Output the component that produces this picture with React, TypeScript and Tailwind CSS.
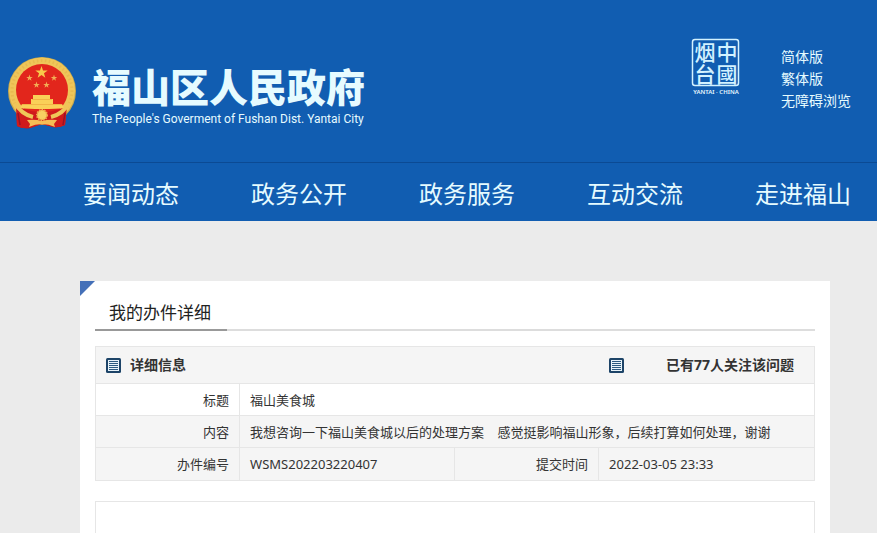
import React from "react";

const navItems = ["要闻动态", "政务公开", "政务服务", "互动交流", "走进福山"];

const topLinks = ["简体版", "繁体版", "无障碍浏览"];

function starPoints(cx: number, cy: number, r: number) {
  const points: string[] = [];
  for (let i = 0; i < 10; i++) {
    const radius = i % 2 === 0 ? r : r * 0.4;
    const angle = (Math.PI / 5) * i - Math.PI / 2;
    points.push(
      `${(cx + radius * Math.cos(angle)).toFixed(2)},${(cy + radius * Math.sin(angle)).toFixed(2)}`
    );
  }
  return points.join(" ");
}

function Emblem() {
  return (
    <svg
      viewBox="0 0 68 72"
      className="w-[68px] h-[72px] shrink-0"
      role="img"
      aria-label="国徽"
    >
      {/* ribbons behind the wheat ring */}
      <path d="M8 48h51l-2 20q-6 3-12 2l-11-3-12 4q-8 1-13-2z" fill="#c4161c" />
      <circle cx="34" cy="34" r="34" fill="#c9a94e" />
      <circle cx="34" cy="33.5" r="33" fill="#efc659" />
      <circle
        cx="34"
        cy="33.5"
        r="30"
        fill="none"
        stroke="#e0a840"
        strokeWidth="3"
        strokeDasharray="1.5 2.5"
        opacity="0.4"
      />
      <circle cx="34" cy="33" r="26" fill="#e2261c" />
      <polygon points={starPoints(33.5, 15.5, 6.5)} fill="#f8c94a" />
      <polygon points={starPoints(21.5, 21, 3.4)} fill="#f2ad55" />
      <polygon points={starPoints(46, 21, 3.4)} fill="#f2ad55" />
      <polygon points={starPoints(28.5, 28, 3.4)} fill="#f2ad55" />
      <polygon points={starPoints(38.5, 28, 3.4)} fill="#f2ad55" />
      {/* drapery */}
      <path
        d="M8 50l6 1q9 4 20 4t20-4l5-1-2 18q-6 3-12 2l-11-3-12 4q-8 1-13-2z"
        fill="#d01a1c"
      />
      <path
        d="M7 46q6 11 18 14M61 46q-6 11-18 14"
        stroke="#efc659"
        strokeWidth="4"
        fill="none"
      />
      {/* gate tower */}
      <path
        d="M25 38h17v4h3v5h9l2 4q-7 1-22 1t-22-1l2-4h9v-5h2z"
        fill="#fad058"
      />
      <path d="M24 42.5h20M14 47.5h40" stroke="#eba23a" strokeWidth="0.6" />
      {/* cog wheel */}
      <circle
        cx="34"
        cy="58"
        r="5"
        fill="#f7cf62"
        stroke="#f0b04a"
        strokeWidth="2"
        strokeDasharray="1.5 1"
      />
      <path
        d="M19 63q8-1 15 1 7-2 15-1l-3 4 1 3q-6-3-13-3t-13 3l1-3z"
        fill="#f5bd55"
      />
      <path d="M10 56l2 12M57 56l-2 12" stroke="#9a1226" strokeWidth="1.5" />
    </svg>
  );
}

function YantaiSeal() {
  return (
    <svg
      viewBox="0 0 50 58"
      className="w-[50px] h-[58px] shrink-0 overflow-visible"
      role="img"
      aria-label="中国烟台"
    >
      <rect
        x="1.5"
        y="1.5"
        width="46"
        height="46"
        rx="2.5"
        fill="none"
        stroke="#d3f2ff"
        strokeWidth="1.5"
      />
      <g
        fill="#d3f2ff"
        fontFamily="'Noto Sans CJK SC', sans-serif"
        fontWeight="500"
        fontSize="21"
        textAnchor="middle"
      >
        <text x="14" y="22">烟</text>
        <text x="36" y="22">中</text>
        <text x="14" y="44">台</text>
        <text x="36" y="44">國</text>
      </g>
      <text
        x="25"
        y="56"
        textAnchor="middle"
        fill="#e6f8ff"
        fontFamily="'Noto Sans', sans-serif"
        fontWeight="600"
        fontSize="6"
      >
        YANTAI · CHINA
      </text>
    </svg>
  );
}

function ListIcon() {
  return (
    <svg viewBox="0 0 15 15" className="w-[15px] h-[15px] shrink-0" aria-hidden="true">
      <rect width="15" height="15" rx="1.5" fill="#1d4468" />
      <rect x="2" y="2" width="11" height="11" fill="#e9f4fa" />
      <path
        d="M3 3.5h9M3 5.5h9M3 7.5h9M3 9.5h9M3 11.5h9"
        stroke="#2c5a80"
        strokeWidth="1"
      />
    </svg>
  );
}

function Header() {
  return (
    <header className="bg-[#115db1] text-[#e6fbff]">
      <div className="flex items-start h-[162px] pl-2 pr-[26px]">
        <div className="flex items-start gap-4 pt-[57px]">
          <Emblem />
          <div className="pt-2">
            <h1 className="text-[39px] leading-[44px] font-black whitespace-nowrap">
              福山区人民政府
            </h1>
            <p className="pt-px text-[12px] leading-[18px] whitespace-nowrap font-['Roboto',sans-serif]">
              The People's Goverment of Fushan Dist. Yantai City
            </p>
          </div>
        </div>
        <div className="flex items-start gap-10 ml-auto">
          <div className="pt-[38px]">
            <YantaiSeal />
          </div>
          <ul className="pt-[46px] text-[14px] leading-[22px] whitespace-nowrap">
            {topLinks.map((link) => (
              <li key={link}>
                <a href="#">{link}</a>
              </li>
            ))}
          </ul>
        </div>
      </div>
      <nav className="flex items-center gap-[72px] h-[59px] pt-1 pl-[83px] border-t border-[#0b4a94] overflow-hidden">
        {navItems.map((item) => (
          <a
            key={item}
            href="#"
            className="shrink-0 text-[24px] leading-8 whitespace-nowrap"
          >
            {item}
          </a>
        ))}
      </nav>
    </header>
  );
}

function DetailTable() {
  return (
    <section className="mt-[15px] border border-[#e6e6e6]">
      <div className="flex items-center h-9 pl-[10px] pr-5 bg-[#f5f5f5] text-[14px] leading-5 font-bold">
        <ListIcon />
        <h3 className="ml-[9px]">详细信息</h3>
        <div className="flex items-center gap-[42px] ml-auto">
          <ListIcon />
          <span>已有77人关注该问题</span>
        </div>
      </div>
      <table className="w-full table-fixed border-collapse text-[13px] leading-5">
        <colgroup>
          <col className="w-1/5" />
          <col className="w-[30%]" />
          <col className="w-1/5" />
          <col className="w-[30%]" />
        </colgroup>
        <tbody>
          <tr className="h-8 border-t border-[#e6e6e6]">
            <th scope="row" className="pr-[10px] text-right font-normal">
              标题
            </th>
            <td colSpan={3} className="pl-[10px] border-l border-[#e6e6e6]">
              福山美食城
            </td>
          </tr>
          <tr className="h-8 border-t border-[#e6e6e6] bg-[#f5f5f5]">
            <th scope="row" className="pr-[10px] text-right font-normal">
              内容
            </th>
            <td colSpan={3} className="pl-[10px] border-l border-[#e6e6e6]">
              我想咨询一下福山美食城以后的处理方案&nbsp;&nbsp;&nbsp;&nbsp;感觉挺影响福山形象，后续打算如何处理，谢谢
            </td>
          </tr>
          <tr className="h-8 border-t border-[#e6e6e6] bg-[#f5f5f5]">
            <th scope="row" className="pr-[10px] text-right font-normal">
              办件编号
            </th>
            <td className="pl-[10px] border-l border-[#e6e6e6]">
              WSMS202203220407
            </td>
            <th
              scope="row"
              className="pr-[10px] border-l border-[#e6e6e6] text-right font-normal"
            >
              提交时间
            </th>
            <td className="pl-[10px] border-l border-[#e6e6e6]">
              2022-03-05 23:33
            </td>
          </tr>
        </tbody>
      </table>
    </section>
  );
}

export default function App() {
  return (
    <div
      lang="zh-CN"
      className="h-screen overflow-hidden bg-[#ebebeb] text-[#333333] font-['Noto_Sans','Noto_Sans_CJK_SC',sans-serif]"
    >
      <Header />
      <main className="relative min-h-screen mt-[60px] ml-20 mr-[47px] px-[15px] bg-white">
        <div className="absolute top-0 left-0 w-[15px] h-[15px] bg-[#4470b8] [clip-path:polygon(0_0,100%_0,0_100%)]" />
        <div className="flex pt-[18px] border-b-2 border-[#dddddd]">
          <h2 className="-mb-[2px] pl-[14px] pr-4 pb-[2px] border-b-2 border-[#999999] text-[17px] leading-7 text-[#222222]">
            我的办件详细
          </h2>
        </div>
        <DetailTable />
        <section className="mt-5 h-20 border border-[#e6e6e6]" />
      </main>
    </div>
  );
}
